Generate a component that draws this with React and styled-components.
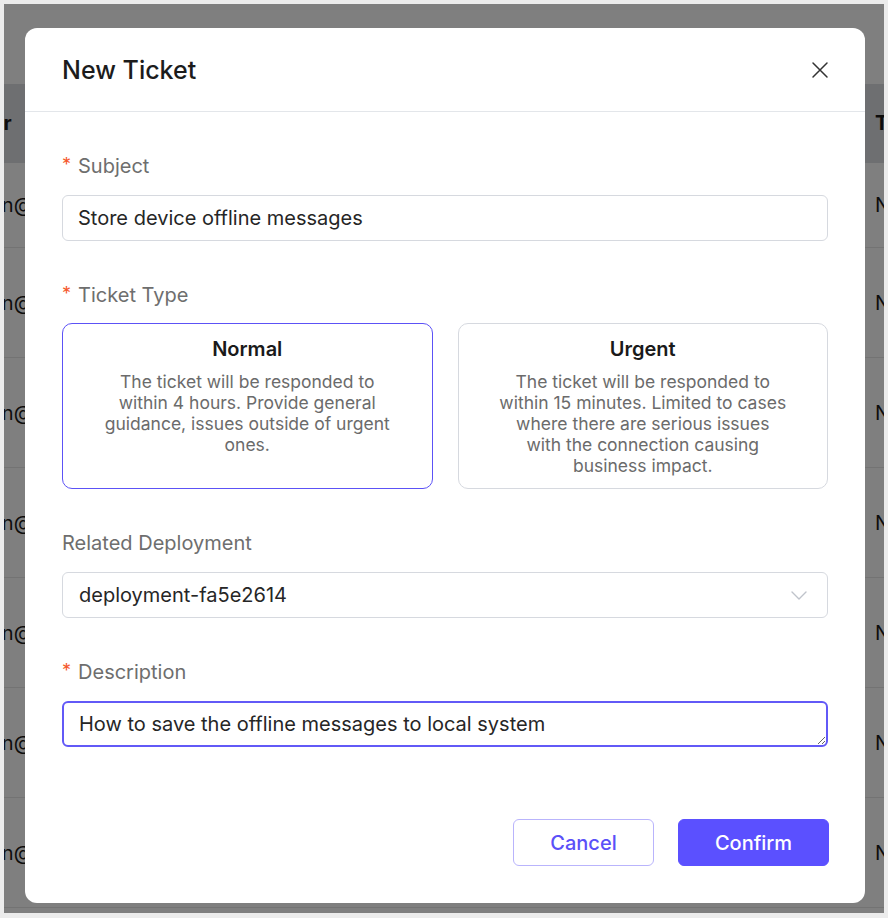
import React from "react";
import styled, { createGlobalStyle } from "styled-components";

const GlobalStyle = createGlobalStyle`
  html, body {
    margin: 0;
    padding: 0;
    background: #ececec;
    font-family: Inter, "Noto Sans", "Liberation Sans", sans-serif;
  }
  * {
    box-sizing: border-box;
  }
`;

const Frame = styled.div`
  width: 888px;
  height: 918px;
  padding: 4px 4px 5px 4px;
  background: #ececec;
`;

const Screen = styled.div`
  position: relative;
  width: 880px;
  height: 909px;
  overflow: hidden;
  background: #ffffff;
`;

// table behind the dialog
const TableTop = styled.div`
  height: 80px;
`;

const TableRow = styled.div`
  display: flex;
  align-items: center;
  height: ${(p) => p.$height}px;
  background: ${(p) => (p.$head ? "#dcdee2" : "#ffffff")};
  border-bottom: 1px solid ${(p) => (p.$head ? "transparent" : "#e6e6e6")};
  font-size: 20px;
  font-weight: ${(p) => (p.$head ? 700 : 400)};
  color: #1a1a1a;
  white-space: nowrap;
`;

const LeadCell = styled.div`
  flex: 1;
  margin-left: ${(p) => p.$shift}px;
`;

const TailCell = styled.div`
  width: 9px;
`;

const Overlay = styled.div`
  position: absolute;
  inset: 0;
  background: rgba(0, 0, 0, 0.5);
  display: flex;
  padding: 24px 19px 10px 21px;
`;

const Modal = styled.div`
  flex: 1;
  display: flex;
  flex-direction: column;
  background: #ffffff;
  border-radius: 12px;
`;

const ModalHeader = styled.div`
  height: 84px;
  display: flex;
  align-items: center;
  justify-content: space-between;
  padding: 0 36px 0 37px;
  border-bottom: 1px solid #e3e6ea;
`;

const Title = styled.h2`
  margin: 0;
  font-size: 25px;
  font-weight: 500;
  color: #1c1c1c;
`;

const CloseButton = styled.button`
  display: flex;
  border: none;
  background: none;
  padding: 0;
  cursor: pointer;
`;

const ModalBody = styled.div`
  flex: 1;
  display: flex;
  flex-direction: column;
  gap: 40px;
  padding: 40px 37px 0;
`;

const Field = styled.div`
  display: flex;
  flex-direction: column;
  gap: ${(p) => p.$gap || 15}px;
`;

const Label = styled.label`
  display: flex;
  align-items: center;
  height: 28px;
  font-size: 20px;
  color: #6e6e6e;
`;

const Required = styled.span`
  color: #f5582b;
  font-size: 18px;
  margin-right: 7px;
  position: relative;
  top: -2px;
`;

const TextInput = styled.input`
  height: 46px;
  width: 100%;
  padding: 0 15px;
  border: 1px solid #d6d9df;
  border-radius: 6px;
  font-family: inherit;
  font-size: 20px;
  color: #262626;
  outline: none;
`;

const TypeGrid = styled.div`
  display: grid;
  grid-template-columns: 1fr 1fr;
  gap: 25px;
`;

const TypeCard = styled.div`
  min-height: 166px;
  padding: 11px 39px;
  border: 1px solid ${(p) => (p.$active ? "#5c52f6" : "#d6d9df")};
  border-radius: 10px;
  text-align: center;
  cursor: pointer;
`;

const CardTitle = styled.div`
  font-size: 20px;
  line-height: 28px;
  font-weight: 600;
  color: #1a1a1a;
  margin-bottom: 8px;
`;

const CardText = styled.div`
  font-size: 17.5px;
  line-height: 21px;
  color: #6b6b6b;
`;

const SelectBox = styled.div`
  height: 46px;
  display: flex;
  align-items: center;
  justify-content: space-between;
  padding: 0 20px 0 16px;
  border: 1px solid #d6d9df;
  border-radius: 6px;
  font-size: 20px;
  color: #262626;
`;

const TextArea = styled.textarea`
  height: 46px;
  width: 100%;
  padding: 7px 15px;
  border: 2px solid #6259f7;
  border-radius: 6px;
  font-family: inherit;
  font-size: 20px;
  line-height: 28px;
  color: #262626;
  outline: none;
  resize: vertical;
`;

const Footer = styled.div`
  display: flex;
  justify-content: flex-end;
  gap: 24px;
  padding: 0 36px 37px;
`;

const Button = styled.button`
  height: 47px;
  width: ${(p) => p.$width}px;
  border-radius: 6px;
  font-family: inherit;
  font-size: 20px;
  font-weight: 500;
  cursor: pointer;
  border: 1px solid ${(p) => (p.$primary ? "#5b50ff" : "#b9b4fc")};
  background: ${(p) => (p.$primary ? "#5b50ff" : "#ffffff")};
  color: ${(p) => (p.$primary ? "#ffffff" : "#5b50f8")};
`;

const rows = [85, 110, 110, 110, 110, 110, 110];

const types = [
  {
    key: "normal",
    title: "Normal",
    text: "The ticket will be responded to within 4 hours. Provide general guidance, issues outside of urgent ones.",
  },
  {
    key: "urgent",
    title: "Urgent",
    text: "The ticket will be responded to within 15 minutes. Limited to cases where there are serious issues with the connection causing business impact.",
  },
];

export default function App() {
  const selected = "normal";

  return (
    <Frame>
      <GlobalStyle />
      <Screen>
        <TableTop />
        <TableRow $head $height={79}>
          <LeadCell $shift={-66}>Creator</LeadCell>
          <TailCell>Type</TailCell>
        </TableRow>
        {rows.map((h, i) => (
          <TableRow key={i} $height={h}>
            <LeadCell $shift={-48}>admin@emqx.io</LeadCell>
            <TailCell>Normal</TailCell>
          </TableRow>
        ))}

        <Overlay>
          <Modal>
            <ModalHeader>
              <Title>New Ticket</Title>
              <CloseButton aria-label="Close">
                <svg width="18" height="18" viewBox="0 0 18 18" fill="none">
                  <path
                    d="M2 2L16 16M16 2L2 16"
                    stroke="#333"
                    strokeWidth="1.5"
                    strokeLinecap="round"
                  />
                </svg>
              </CloseButton>
            </ModalHeader>

            <ModalBody>
              <Field>
                <Label>
                  <Required>*</Required>Subject
                </Label>
                <TextInput readOnly value="Store device offline messages" />
              </Field>

              <Field $gap={14}>
                <Label>
                  <Required>*</Required>Ticket Type
                </Label>
                <TypeGrid>
                  {types.map((t) => (
                    <TypeCard key={t.key} $active={t.key === selected}>
                      <CardTitle>{t.title}</CardTitle>
                      <CardText>{t.text}</CardText>
                    </TypeCard>
                  ))}
                </TypeGrid>
              </Field>

              <Field>
                <Label>Related Deployment</Label>
                <SelectBox>
                  deployment-fa5e2614
                  <svg width="16" height="9" viewBox="0 0 16 9" fill="none">
                    <path
                      d="M1 1L8 8L15 1"
                      stroke="#bfc3cb"
                      strokeWidth="1.4"
                      strokeLinecap="round"
                      strokeLinejoin="round"
                    />
                  </svg>
                </SelectBox>
              </Field>

              <Field>
                <Label>
                  <Required>*</Required>Description
                </Label>
                <TextArea
                  readOnly
                  rows={1}
                  value="How to save the offline messages to local system"
                />
              </Field>
            </ModalBody>

            <Footer>
              <Button $width={141}>Cancel</Button>
              <Button $primary $width={151}>
                Confirm
              </Button>
            </Footer>
          </Modal>
        </Overlay>
      </Screen>
    </Frame>
  );
}
